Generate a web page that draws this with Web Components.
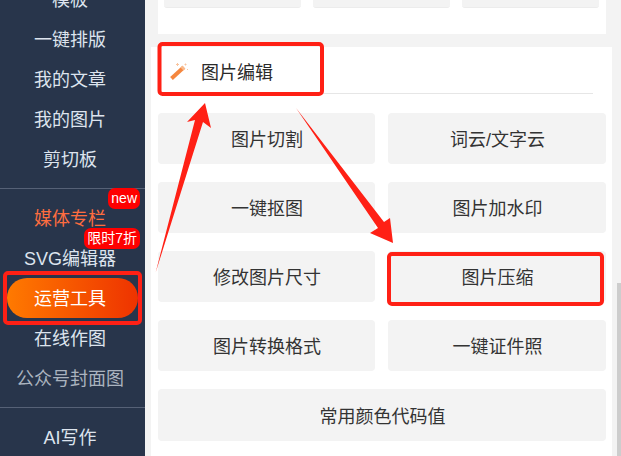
<!DOCTYPE html>
<html lang="zh">
<head>
<meta charset="utf-8">
<title>运营工具</title>
<style>
  html, body {
    margin: 0;
    height: 456px;
    overflow: hidden;
    background: #f3f3f3;
    font-family: "Liberation Sans", "Noto Sans CJK SC", sans-serif;
  }
</style>
</head>
<body>
<tool-page></tool-page>

<script>
class NavItem extends HTMLElement {
  constructor() {
    super();
    this.shadowDOM = this.attachShadow({ mode: "open" });
    this.shadowDOM.innerHTML = `
      <style>
        :host {
          display: flex;
          position: relative;
          align-items: center;
          justify-content: center;
          height: 40px;
          font-size: 18px;
          color: #dde4ee;
          white-space: nowrap;
        }
        :host([hot]) { color: #ff6d3f; }
        :host([dim]) { color: #aab3bf; }
        :host([active]) { color: #fff; }
        .label { padding: 0 5px 3px 0; }
        .pill {
          display: flex;
          align-items: center;
          justify-content: center;
          box-sizing: border-box;
          width: 131px;
          height: 40px;
          padding: 0 5px 3px 0;
          border-radius: 20px;
          background: linear-gradient(90deg, #ff7a00, #ee3300);
        }
        .badge {
          position: absolute;
          right: 5px;
          top: -10px;
          height: 21px;
          padding: 0 3px;
          border-radius: 7px;
          background: #fe0000;
          color: #fff;
          font-size: 14px;
          line-height: 20px;
        }
      </style>
      <span class="label"><slot></slot></span>
    `;
  }

  connectedCallback() {
    if (this.hasAttribute("active")) {
      this.shadowDOM.querySelector(".label").className = "pill";
    }
    if (this.hasAttribute("badge")) {
      const badge = document.createElement("span");
      badge.className = "badge";
      badge.textContent = this.getAttribute("badge");
      this.shadowDOM.appendChild(badge);
    }
  }
}

class SideNav extends HTMLElement {
  constructor() {
    super();
    this.shadowDOM = this.attachShadow({ mode: "open" });
    this.shadowDOM.innerHTML = `
      <style>
        :host {
          display: block;
          flex: none;
          width: 145px;
          height: 456px;
          overflow: hidden;
          background: #28354b;
        }
        .group { padding: 9px 0; border-bottom: 1px solid #566176; }
        .group:first-of-type { margin-top: -30px; }
        .group:last-of-type { border-bottom: 0; }
      </style>
      <div class="group">
        <nav-item>模板</nav-item>
        <nav-item>一键排版</nav-item>
        <nav-item>我的文章</nav-item>
        <nav-item>我的图片</nav-item>
        <nav-item>剪切板</nav-item>
      </div>
      <div class="group">
        <nav-item hot badge="new">媒体专栏</nav-item>
        <nav-item badge="限时7折">SVG编辑器</nav-item>
        <nav-item active>运营工具</nav-item>
        <nav-item>在线作图</nav-item>
        <nav-item dim>公众号封面图</nav-item>
      </div>
      <div class="group">
        <nav-item>AI写作</nav-item>
      </div>
    `;
  }
}

class ToolButton extends HTMLElement {
  constructor() {
    super();
    this.shadowDOM = this.attachShadow({ mode: "open" });
    this.shadowDOM.innerHTML = `
      <style>
        :host {
          display: flex;
          align-items: center;
          justify-content: center;
          padding: 0 0 1px 1px;
          border-radius: 4px;
          background: #f3f3f3;
          font-size: 18px;
          color: #333;
          white-space: nowrap;
        }
        :host([wide]) { grid-column: span 2; }
      </style>
      <slot></slot>
    `;
  }
}

class ToolCard extends HTMLElement {
  constructor() {
    super();
    this.shadowDOM = this.attachShadow({ mode: "open" });
    this.shadowDOM.innerHTML = `
      <style>
        :host {
          display: block;
          background: #fff;
        }
        header {
          display: flex;
          align-items: center;
          gap: 12px;
          height: 47px;
          margin: 0 19px 19px 7px;
          padding: 1px 0 0 11px;
          box-sizing: border-box;
          border-bottom: 1px solid #e6e6e6;
          font-size: 18px;
          color: #2b2b2b;
        }
        svg { display: block; flex: none; }
        .grid {
          display: grid;
          grid-template-columns: 217px 218px;
          grid-template-rows: repeat(4, 51px) 52px;
          gap: 18px 13px;
          padding: 0 6px 15px 7px;
        }
      </style>
      <header>
        <svg width="20" height="20" viewBox="0 0 20 20">
          <path d="M2.5 17.5 14.5 6.5" stroke="#f5873f" stroke-width="4" fill="none"/>
          <path d="M13 8 15 6" stroke="#f9b98c" stroke-width="4" fill="none"/>
          <path d="M7 3.5h3M8.5 2v3M16.5 2.5v2M15.5 3.5h2M18 8.5h1" stroke="#f9c49e" stroke-width="1" fill="none"/>
        </svg>
        <span><slot name="title"></slot></span>
      </header>
      <div class="grid"><slot></slot></div>
    `;
  }
}

class TopStrip extends HTMLElement {
  constructor() {
    super();
    this.shadowDOM = this.attachShadow({ mode: "open" });
    this.shadowDOM.innerHTML = `
      <style>
        :host {
          display: grid;
          grid-template-columns: repeat(3, 137px);
          gap: 12px;
          height: 34px;
          margin: 0 6px 13px 7px;
          padding: 0 7px 0 6px;
          box-sizing: border-box;
          background: #fff;
        }
        div {
          height: 8px;
          border-radius: 0 0 3px 3px;
          background: #f3f3f3;
          border-bottom: 1px solid #ececec;
          box-sizing: border-box;
        }
      </style>
      <div></div><div></div><div></div>
    `;
  }
}

class RedMarks extends HTMLElement {
  constructor() {
    super();
    this.shadowDOM = this.attachShadow({ mode: "open" });
    this.shadowDOM.innerHTML = `
      <style>
        :host {
          position: absolute;
          left: 0;
          top: 0;
          width: 621px;
          height: 456px;
          pointer-events: none;
        }
        svg { display: block; }
        rect { fill: none; stroke: #ff2015; stroke-width: 4; }
        polygon { fill: #ff2015; }
      </style>
      <svg width="621" height="456" viewBox="0 0 621 456">
        <rect x="159.5" y="44" width="162.5" height="50" rx="3"/>
        <rect x="5" y="273" width="135" height="50" rx="3"/>
        <rect x="389" y="254" width="213" height="50" rx="3"/>
        <polygon points="205,103 211,128 203,122 155.5,273 195,120 187,122"/>
        <polygon points="296,108 384,222 390,218 393,243 370,233 378,228"/>
      </svg>
    `;
  }
}

class ToolPage extends HTMLElement {
  constructor() {
    super();
    this.shadowDOM = this.attachShadow({ mode: "open" });
    this.shadowDOM.innerHTML = `
      <style>
        :host {
          display: flex;
          position: relative;
          width: 621px;
          height: 456px;
          overflow: hidden;
          background: #f3f3f3;
        }
        main {
          flex: 1;
          padding: 0 5px 0 6px;
        }
        .scrollbar {
          flex: none;
          width: 4px;
          margin-top: 283px;
          background: #cdcdcd;
        }
      </style>
      <side-nav></side-nav>
      <main>
        <top-strip></top-strip>
        <tool-card>
          <span slot="title">图片编辑</span>
          <tool-button>图片切割</tool-button>
          <tool-button>词云/文字云</tool-button>
          <tool-button>一键抠图</tool-button>
          <tool-button>图片加水印</tool-button>
          <tool-button>修改图片尺寸</tool-button>
          <tool-button>图片压缩</tool-button>
          <tool-button>图片转换格式</tool-button>
          <tool-button>一键证件照</tool-button>
          <tool-button wide>常用颜色代码值</tool-button>
        </tool-card>
      </main>
      <div class="scrollbar"></div>
      <red-marks></red-marks>
    `;
  }
}

customElements.define("nav-item", NavItem);
customElements.define("side-nav", SideNav);
customElements.define("tool-button", ToolButton);
customElements.define("tool-card", ToolCard);
customElements.define("top-strip", TopStrip);
customElements.define("red-marks", RedMarks);
customElements.define("tool-page", ToolPage);
</script>
</body>
</html>
